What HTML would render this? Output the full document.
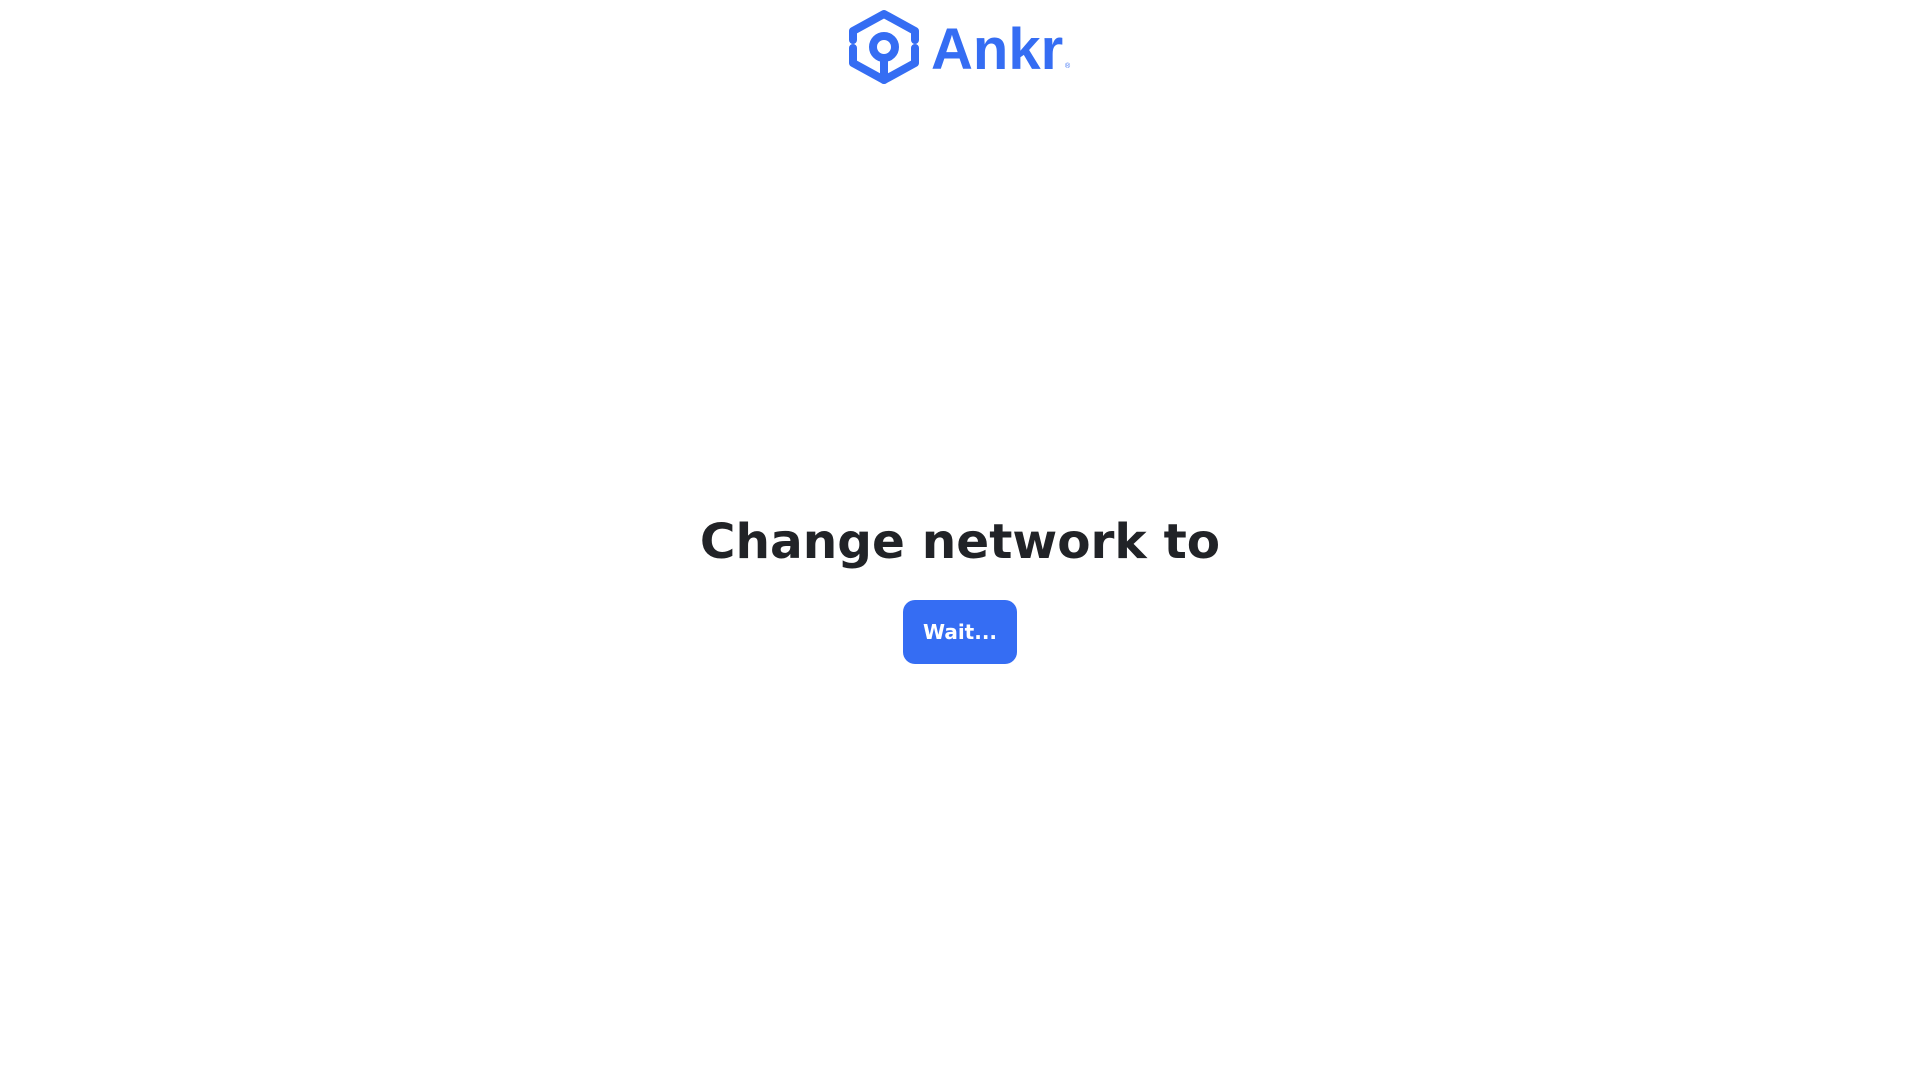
<!DOCTYPE html>
<html><head><meta charset="utf-8"><style>
html,body{margin:0;padding:0;background:#fff;width:1920px;height:1080px;overflow:hidden;font-family:"DejaVu Sans","Liberation Sans",sans-serif;}
.logo{position:absolute;left:0;top:0}
.brand{position:absolute;left:931px;top:17px;font-family:"Liberation Sans",sans-serif;font-weight:bold;font-size:58px;color:#356DF3;letter-spacing:0px;line-height:66px}
.reg{position:absolute;left:1065px;top:63px;font-size:7px;color:#356DF3;font-family:"Liberation Sans",sans-serif}
h1{position:absolute;left:0;width:1920px;text-align:center;top:509px;margin:0;font-size:48.5px;font-weight:bold;color:#212327;line-height:66px}
.btn{position:absolute;left:903px;top:600px;width:114px;height:64px;border-radius:12px;background:#356DF3;color:#fff;font-weight:bold;font-size:20px;display:flex;align-items:center;justify-content:center}
</style></head><body>
<svg class="logo" width="1920" height="100">
<g fill="none" stroke="#356DF3" stroke-width="8" stroke-linecap="round" stroke-linejoin="round">
<path d="M853 40 V31 L884 14 L915 31 V40"/>
<path d="M853 48 V63 L884 80 L915 63 V48"/>
<circle cx="884" cy="47" r="11"/>
<path d="M884 58 V80"/>
</g>
</svg>
<div class="brand">Ankr</div>
<div class="reg">®</div>
<h1>Change network to</h1>
<div class="btn">Wait...</div>
</body></html>
